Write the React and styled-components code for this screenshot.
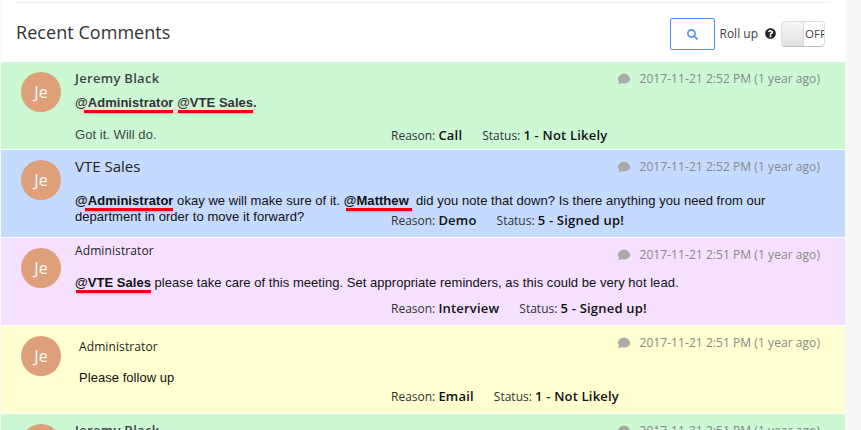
import React from "react";
import styled, { createGlobalStyle } from "styled-components";
import { FaSearch, FaComment, FaQuestionCircle } from "react-icons/fa";

const GlobalStyle = createGlobalStyle`
	html, body {
		margin: 0;
		height: 100%;
		overflow: hidden;
		background: #f8f8f8;
	}
`;

const Panel = styled.section`
	width: 844px;
	height: 430px;
	margin-left: 1px;
	background: #fff;
	overflow: hidden;
	font-family: "Open Sans", sans-serif;
`;

const Header = styled.header`
	height: 60px;
	margin: 2px 15px 0;
	padding: 3px 5px 0 0;
	border-top: 1px solid #eee;
	box-sizing: border-box;
	display: flex;
	align-items: center;
	gap: 4px;
`;

const Title = styled.h2`
	margin: 0 auto 4px 0;
	font-size: 18px;
	font-weight: 400;
	color: #333;
	letter-spacing: 0.05px;
`;

const SearchButton = styled.button`
	width: 45px;
	height: 32px;
	padding: 0;
	border: 1px solid #4d90fe;
	border-radius: 2px;
	background: #fff;
	color: #5b8ff9;
	font-size: 11px;
	display: flex;
	align-items: center;
	justify-content: center;
`;

const RollUp = styled.span`
	font-size: 12px;
	color: #444;
	display: flex;
	align-items: center;
	gap: 7px;
	margin: 0 1px 1px 0;
	svg {
		color: #222;
		font-size: 11px;
	}
`;

const Toggle = styled.div`
	width: 44px;
	height: 26px;
	box-sizing: border-box;
	border: 1px solid #ddd;
	border-bottom-color: #bbb;
	border-radius: 4px;
	display: flex;
	overflow: hidden;
	font-size: 11.5px;
	color: #444;
`;

const ToggleHandle = styled.span`
	width: 21px;
	flex: none;
	background: linear-gradient(#f6f6f6, #e0e0e0);
	border-right: 1px solid #ddd;
`;

const ToggleLabel = styled.span`
	flex: 1;
	padding-left: 1px;
	line-height: 24px;
	white-space: nowrap;
`;

const Row = styled.article`
	height: 87px;
	margin-bottom: 1px;
	box-sizing: border-box;
	padding: 10px 25px 0 20px;
	background: ${(p) => p.$bg};
	display: grid;
	grid-template-columns: 40px 1fr;
	column-gap: 14px;
`;

const Avatar = styled.div`
	width: 40px;
	height: 40px;
	border-radius: 50%;
	background: #dea078;
	color: #fff;
	font-size: 16px;
	display: flex;
	align-items: center;
	justify-content: center;
`;

const Main = styled.div`
	display: grid;
	grid-template-rows: 16px 1fr;
	height: 68px;
	padding-left: ${(p) => p.$indent}px;
`;

const TopLine = styled.div`
	display: flex;
	justify-content: space-between;
	align-items: flex-start;
	height: 16px;
`;

const Name = styled.div`
	margin-top: ${(p) => p.$top}px;
	font-size: ${(p) => p.$size}px;
	font-weight: ${(p) => p.$weight};
	color: ${(p) => p.$color};
	letter-spacing: ${(p) => p.$spacing}px;
	white-space: nowrap;
`;

const Stamp = styled.div`
	font-size: 12px;
	line-height: 16px;
	letter-spacing: 0.06px;
	color: #888;
	display: flex;
	align-items: center;
	gap: 10px;
	margin-top: -1px;
	svg {
		color: #aaa;
		font-size: 12px;
	}
`;

const Content = styled.div`
	grid-area: 2 / 1;
	display: grid;
	min-height: 0;
`;

const Body = styled.div`
	grid-area: 1 / 1;
	padding-top: ${(p) => p.$top}px;
	font-family: "Liberation Sans", Arial, sans-serif;
	font-size: 13px;
	line-height: 16px;
	letter-spacing: 0.04px;
	color: ${(p) => p.$color};
`;

const Note = styled.p`
	margin: 16px 0 0;
	color: #444;
`;

const Mention = styled.b`
	position: relative;
	&::after {
		content: "";
		position: absolute;
		left: ${(p) => p.$inset}px;
		right: 0;
		bottom: -3px;
		height: 3px;
		background: #f0000f;
		box-shadow: 0 1px 2px rgba(0, 0, 0, 0.2);
	}
`;

const Footer = styled.div`
	grid-area: 1 / 1;
	align-self: end;
	margin-left: ${(p) => p.$left}px;
	display: flex;
	gap: 20px;
	font-size: 12px;
	line-height: 16px;
	color: #333;
	white-space: nowrap;
	height: 16px;
	b {
		font-size: 13px;
		font-weight: 600;
		letter-spacing: 0.2px;
		color: #111;
	}
`;

const comments = [
	{
		id: 1,
		bg: "#ccf9d4",
		name: "Jeremy Black",
		nameProps: { $top: -3, $size: 13, $weight: 600, $color: "#444", $spacing: 0.3 },
		time: "2017-11-21 2:52 PM (1 year ago)",
		reason: "Call",
		status: "1 - Not Likely",
		bodyColor: "#333",
		body: (
			<>
				<Mention $inset={9}>@Administrator</Mention> <Mention $inset={1}>@VTE Sales</Mention>
				<b>.</b>
				<Note>Got it. Will do.</Note>
			</>
		),
		top: 7,
	},
	{
		id: 2,
		bg: "#c5daff",
		name: "VTE Sales",
		nameProps: { $top: -4, $size: 15, $weight: 400, $color: "#222", $spacing: 0 },
		time: "2017-11-21 2:52 PM (1 year ago)",
		reason: "Demo",
		status: "5 - Signed up!",
		bodyColor: "#111",
		body: (
			<>
				<Mention $inset={10}>@Administrator</Mention> okay we will make sure of it.{" "}
				<Mention $inset={2}>@Matthew&nbsp;</Mention> did you note that down? Is there anything you need from our
				department in order to move it forward?
			</>
		),
		top: 17,
	},
	{
		id: 3,
		bg: "#f5e0ff",
		name: "Administrator",
		nameProps: { $top: -6, $size: 12, $weight: 400, $color: "#222", $spacing: 0.1 },
		time: "2017-11-21 2:51 PM (1 year ago)",
		reason: "Interview",
		status: "5 - Signed up!",
		bodyColor: "#111",
		body: (
			<>
				<Mention $inset={1}>@VTE Sales</Mention> please take care of this meeting. Set appropriate reminders, as this
				could be very hot lead.
			</>
		),
		top: 11,
	},
	{
		id: 4,
		bg: "#ffffd2",
		name: "Administrator",
		nameProps: { $top: 2, $size: 12, $weight: 400, $color: "#222", $spacing: 0.1 },
		time: "2017-11-21 2:51 PM (1 year ago)",
		reason: "Email",
		status: "1 - Not Likely",
		bodyColor: "#111",
		indent: 4,
		body: <>Please follow up</>,
		top: 18,
	},
	{
		id: 5,
		bg: "#ccf9d4",
		name: "Jeremy Black",
		nameProps: { $top: -3, $size: 13, $weight: 600, $color: "#444", $spacing: 0.3 },
		time: "2017-11-21 2:51 PM (1 year ago)",
		reason: "Call",
		status: "1 - Not Likely",
		bodyColor: "#333",
		body: null,
		top: 7,
	},
];

export default function App() {
	return (
		<>
			<GlobalStyle />
			<Panel>
				<Header>
					<Title>Recent Comments</Title>
					<SearchButton aria-label="Search">
						<FaSearch />
					</SearchButton>
					<RollUp>
						Roll up <FaQuestionCircle />
					</RollUp>
					<Toggle>
						<ToggleHandle />
						<ToggleLabel>OFF</ToggleLabel>
					</Toggle>
				</Header>
				{comments.map((c) => (
					<Row key={c.id} $bg={c.bg}>
						<Avatar>Je</Avatar>
						<Main $indent={c.indent || 0}>
							<TopLine>
								<Name {...c.nameProps}>{c.name}</Name>
								<Stamp>
									<FaComment />
									{c.time}
								</Stamp>
							</TopLine>
							<Content>
								<Body $top={c.top} $color={c.bodyColor}>
									{c.body}
								</Body>
								<Footer $left={316 - (c.indent || 0)}>
									<span>
										Reason: <b>{c.reason}</b>
									</span>
									<span>
										Status: <b>{c.status}</b>
									</span>
								</Footer>
							</Content>
						</Main>
					</Row>
				))}
			</Panel>
		</>
	);
}
